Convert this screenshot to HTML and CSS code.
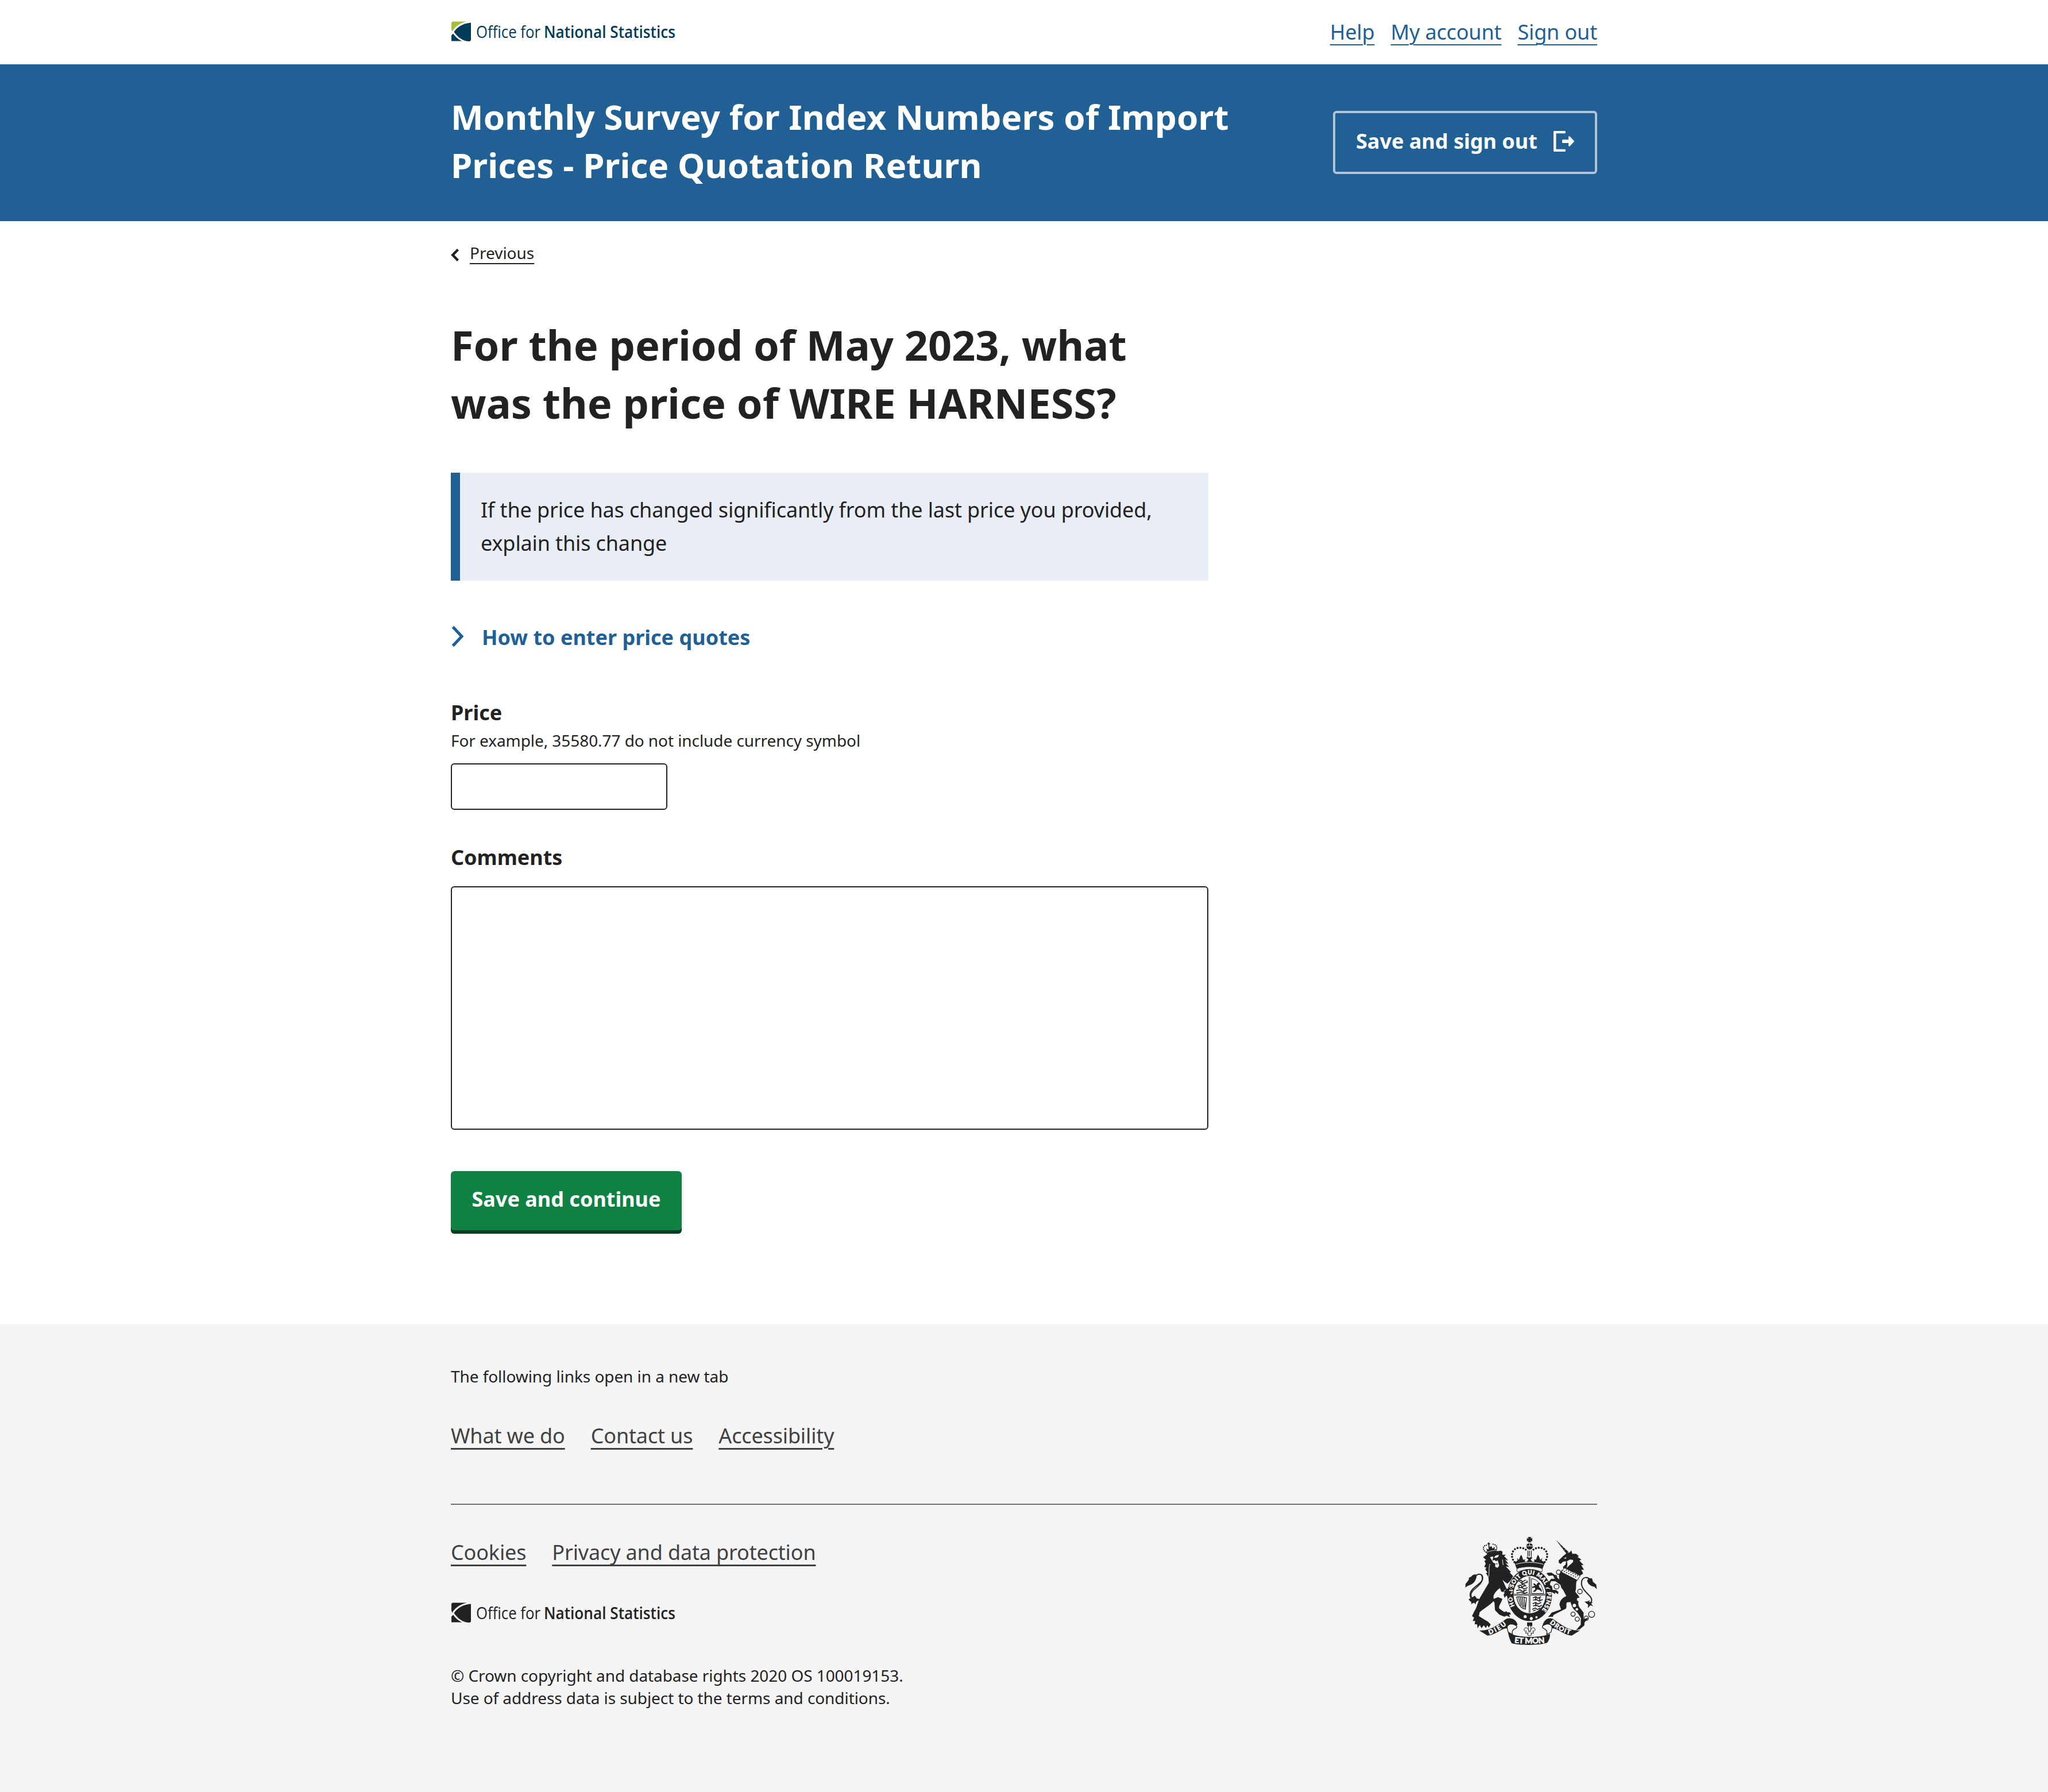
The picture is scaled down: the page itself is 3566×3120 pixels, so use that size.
FILE: index.html
```html
<!DOCTYPE html>
<html lang="en">
<head>
<meta charset="utf-8">
<title>Monthly Survey for Index Numbers of Import Prices - Price Quotation Return</title>
<link rel="stylesheet" href="styles.css">
</head>
<body>
<svg class="defs" width="0" height="0" aria-hidden="true">
  <symbol id="ons-mark" viewBox="0 0 34 35">
    <path class="mark-accent" d="M3 0.500H27C16 3 6 9 1.500 18L0 14V3.500A3 3 0 0 1 3 0.500Z"/>
    <path d="M34 2.500V32A3 3 0 0 1 31 35C20 35 11 28 4.500 18.500C10 10 20 3.500 34 2.500Z"/>
    <path d="M3 21.500C7 27 12 32 19 34.500H0V24.500Z"/>
  </symbol>
</svg>

<header>
  <div class="topbar">
    <div class="container topbar-inner">
      <svg class="logo" width="400" height="44" viewBox="0 0 400 44" role="img" aria-label="Office for National Statistics">
        <use href="#ons-mark" x="1" y="4" width="34" height="35"/>
        <text class="logo-light" x="44" y="32.500" textLength="112" lengthAdjust="spacingAndGlyphs">Office for</text>
        <text class="logo-bold" x="162" y="32.500" textLength="229" lengthAdjust="spacingAndGlyphs">National Statistics</text>
      </svg>
      <nav class="top-links"><a href="#">Help</a><a href="#">My account</a><a href="#">Sign out</a></nav>
    </div>
  </div>
  <div class="banner">
    <div class="container banner-inner">
      <div class="survey-title">Monthly Survey for Index Numbers of Import Prices - Price Quotation Return</div>
      <button class="btn-ghost" type="button">Save and sign out
        <svg width="36" height="36" viewBox="0 0 36 36" aria-hidden="true">
          <path d="M1.500 0H19.500A1.500 1.500 0 0 1 21 1.500V2.800A1.500 1.500 0 0 1 19.500 4.300H4.500V31.700H19.500A1.500 1.500 0 0 1 21 33.200V34.500A1.500 1.500 0 0 1 19.500 36H1.500A1.500 1.500 0 0 1 0 34.500V1.500A1.500 1.500 0 0 1 1.500 0Z"/>
          <path d="M16.500 15H26V10.500Q26.500 8.500 28.500 9.500L35.500 17Q36.300 18 35.500 19L28.500 26.500Q26.500 27.500 26 25.500V21H16.500Q15 21 15 19.500V16.500Q15 15 16.500 15Z"/>
        </svg>
      </button>
    </div>
  </div>
</header>

<main class="container">
  <a class="previous" href="#">
    <svg width="14" height="24" viewBox="0 0 14 24" aria-hidden="true"><path d="M12.500 2.500L3.200 12L12.500 21.500"/></svg>
    <span>Previous</span>
  </a>
  <form class="question">
    <h1>For the period of May 2023, what was the price of WIRE HARNESS?</h1>
    <div class="panel">If the price has changed significantly from the last price you provided, explain this change</div>
    <div class="details">
      <svg width="22" height="38" viewBox="0 0 22 38" aria-hidden="true"><path d="M3.500 2.500L19 19L3.500 35.500"/></svg>
      <span>How to enter price quotes</span>
    </div>
    <label class="label" for="price">Price</label>
    <div class="hint">For example, 35580.77 do not include currency symbol</div>
    <input class="field price" id="price" type="text">
    <label class="label comments-label" for="comments">Comments</label>
    <textarea class="field comments" id="comments"></textarea>
    <button class="btn-save" type="button">Save and continue</button>
  </form>
</main>

<footer>
  <div class="container">
    <p class="small new-tab">The following links open in a new tab</p>
    <nav class="foot-links"><a href="#">What we do</a><a href="#">Contact us</a><a href="#">Accessibility</a></nav>
    <hr>
    <div class="foot-bottom">
      <div>
        <nav class="foot-links legal"><a href="#">Cookies</a><a href="#">Privacy and data protection</a></nav>
        <svg class="logo logo-mono" width="400" height="44" viewBox="0 0 400 44" role="img" aria-label="Office for National Statistics">
          <use href="#ons-mark" x="1" y="4" width="34" height="35"/>
          <text class="logo-light" x="44" y="32.500" textLength="112" lengthAdjust="spacingAndGlyphs">Office for</text>
          <text class="logo-bold" x="162" y="32.500" textLength="229" lengthAdjust="spacingAndGlyphs">National Statistics</text>
        </svg>
        <p class="small copyright">© Crown copyright and database rights 2020 OS 100019153.<br>Use of address data is subject to the terms and conditions.</p>
      </div>
      <svg class="crest" width="230" height="190" viewBox="33 30 690 570" role="img" aria-label="Royal coat of arms">
        <!-- crown -->
        <path d="M361 33H379L375 42L384 38V57L375 52L379 61H361L365 52L356 57V38L365 42Z"/>
        <circle cx="370" cy="82" r="17"/>
        <path class="cut" d="M353 80H387M370 66V80" stroke-width="3"/>
        <path class="dots" d="M350 99C335 86 300 84 286 104C270 126 280 150 292 166M390 99C405 86 440 84 454 104C470 126 460 150 448 166"/>
        <path class="line" d="M361 104V134M369 104V134M379 104V134" stroke-width="4"/>
        <path d="M287 156C300 166 302 160 308 152C300 148 305 140 312 152C318 150 316 140 326 126C336 140 332 152 340 152C344 148 350 150 344 160C352 166 358 162 364 150L355 144L356 136L369 141L382 136L383 144L376 150C382 162 388 166 396 160C390 150 396 148 400 152C408 152 404 140 414 126C424 140 422 150 428 152C435 140 440 148 432 152C438 160 442 166 454 156L437 200C400 186 340 186 303 200Z"/>
        <path class="cut" d="M298 176C340 162 400 162 442 176" stroke-width="3"/>
        <path class="line fill-bg" d="M306 197C340 185 400 185 434 197Q440 206 433 216C400 200 340 200 307 216Q300 206 306 197Z" stroke-width="3"/>
        <!-- garter -->
        <ellipse cx="370" cy="336" rx="117" ry="136"/>
        <ellipse class="bg" cx="370" cy="334" rx="84" ry="98"/>
        <path id="garter-path" class="none" d="M309 418A91 109 0 1 1 431 418"/>
        <text class="motto garter"><textPath href="#garter-path" startOffset="30" textLength="456" lengthAdjust="spacing">HONI SOIT QUI MAL Y PENSE</textPath></text>
        <path class="line" d="M370 240V430M286 335H454" stroke-width="8"/>
        <path class="cut" d="M370 240V430M286 335H454" stroke-width="2.500"/>
        <!-- quarterings -->
        <g class="line" stroke-width="5">
          <path d="M313 266L325 259L334 267L350 257M320 268L333 277L355 270M330 267V282L343 282L352 291M307 290L322 284L332 294L349 285M310 300L328 296L343 305L359 297M315 284V303M300 313L320 309L334 318L355 309M302 326L323 321L343 328L360 322M340 309V327M357 260V274"/>
          <path d="M388 352L402 345L413 353L430 344M388 363L405 359L420 368L438 359M402 345V365M423 350V370M386 382L402 375L413 383L431 374M388 393L405 389L420 397L434 389M402 375V395M384 411L400 404L411 412L426 404M388 419L403 414"/>
        </g>
        <path class="line" d="M380 250V328H444C438 286 415 256 380 250Z" stroke-width="3"/>
        <path d="M388 278C398 270 398 282 407 284C410 268 424 268 426 282L418 283L421 296C430 300 434 310 435 320L422 310L411 307L397 320L387 318L400 306L397 296L384 301L385 292L398 288Z"/>
        <path class="line" d="M303 346C320 346 332 343 354 351L348 410C328 407 310 388 303 346ZM313 349L325 392M322 348L334 400M331 348L341 403M341 349L347 400" stroke-width="4"/>
        <path class="line" d="M319 419C305 420 301 429 307 437" stroke-width="5"/>
        <circle class="bg" cx="347" cy="449" r="8"/><circle class="bg" cx="379" cy="459" r="8"/><circle class="bg" cx="406" cy="452" r="6"/>
        <!-- lion -->
        <path class="dots lion-crown" d="M142 112C121 99 126 74 148 76M196 100C206 81 187 66 170 72"/>
        <path d="M150 66H154V61H159V66H164V71H159L161 86L171 80L176 94L188 84L187 98L200 96L197 110C179 109 164 114 149 124L140 110L149 109L144 94L156 99L154 71H150Z"/>
        <path class="cut" d="M146 114C162 106 180 102 198 103" stroke-width="2.500"/>
        <path d="M127 139L150 122C172 108 201 107 221 105L229 110L227 125L247 126L237 133L259 157L242 150L260 174L244 169L264 190L246 187L273 216L266 218L284 238C278 251 269 265 254 277L230 260L250 304L267 301L263 315L277 321L268 329L283 337L278 349L267 340L262 354L248 339L240 351L234 335L240 323L222 318L215 300L204 308C190 321 176 341 183 356L205 347L228 356C222 379 206 392 212 407L238 425L249 421L254 427L268 427L272 438L263 438L268 452L250 444L238 449L212 439L190 416C185 390 191 374 181 368C154 397 126 410 109 426L105 446L136 466L151 474L167 490L157 506L149 494L142 509L131 494L119 509L110 493L98 510L96 490L83 488L86 472L73 472L80 454L69 446L83 418C98 395 101 362 118 338L157 272L155 242L142 222L150 219L138 201L145 194L133 188L141 173L134 158L143 152Z"/>
        <path class="bg" d="M163 139L177 134L182 142L194 130L210 126L205 138L190 144L203 153L208 170L211 183L202 194L190 188L191 172L180 167L172 153Z"/>
        <path d="M180 140L193 142L205 154L195 160L187 153L176 156ZM193 170L205 173L198 177Z"/>
        <path class="cut" d="M230 259L283 312M156 240C161 210 155 195 163 174M228 151L232 180M244 308L231 324" stroke-width="3"/>
        <path class="line tail" d="M77 373C58 353 53 329 70 309C94 282 128 270 125 244C123 226 103 222 91 234"/>
        <path class="line thin-tail" d="M89 371C59 350 58 329 77 311C104 286 135 267 119 233"/>
        <path d="M93 230C80 226 72 231 65 240L52 247C56 254 49 262 43 269L35 278V300C40 285 69 286 82 267C91 254 94 241 93 230ZM51 359L66 374L64 384L80 376L88 385L91 372L114 358L94 354L84 340Z"/>
        <!-- unicorn -->
        <path d="M507 48L574 112L562 120Z"/>
        <path class="cut" d="M536 72L530 77M548 84L541 90M559 97L551 103" stroke-width="1.800"/>
        <path d="M522 155L545 133L563 118L580 113L588 103L593 121L613 121L627 133L621 138L641 151L630 156L652 179L640 180L654 204L640 204L650 224L634 235L622 229L602 217L579 214L548 200L544 190L558 176L561 160L545 162L532 174L523 168Z"/>
        <path class="bg" d="M548 145L560 139L562 146ZM565 160L581 151L597 153L598 163C588 174 577 180 564 196L568 177Z"/>
        <path d="M538 205L626 247L616 263C610 278 616 298 609 319C617 334 635 342 629 359C623 374 621 391 635 406L652 428L652 463L678 454L657 479L656 495L632 515L612 520L637 492L638 456L618 426C595 409 589 393 584 373L566 374C558 381 566 395 560 407L524 425L495 440L492 449L466 451L478 438L485 428L534 411L526 387C527 370 538 350 562 342L546 311L535 297L531 283L504 264L482 264L475 283L487 290L490 309L508 310L521 320L518 332L505 322L502 331L491 323L475 318L479 304L460 292L468 269L483 251L496 252L505 248L491 234L470 236L458 223L468 220L484 219L502 231L514 245L525 254L523 235Z"/>
        <path class="line fill-bg" d="M552 194L634 236L619 259L536 216Z" stroke-width="3"/>
        <path class="dots collar" d="M552 213L615 244M562 206L622 236"/>
        <path class="line tail" d="M680 383C700 374 698 353 681 338C656 313 634 291 643 261C651 239 674 242 686 255"/>
        <path d="M678 249L696 249L701 267L718 281L721 306L709 293L692 289L677 277L670 262ZM657 371L676 387L674 404L688 389L702 395L691 380L701 375L681 372L684 363L673 369Z"/>
        <circle class="bg" cx="626" cy="359" r="9"/><circle class="bg" cx="604" cy="391" r="9"/><circle class="bg" cx="617" cy="411" r="7"/>
        <g class="line" stroke-width="4">
          <circle cx="521" cy="217" r="11"/><circle cx="505" cy="240" r="7"/><circle cx="511" cy="292" r="13"/><circle cx="633" cy="318" r="12"/><circle cx="597" cy="436" r="11"/><circle cx="619" cy="462" r="11"/><circle cx="666" cy="457" r="11"/><circle cx="694" cy="437" r="16"/>
        </g>
        <!-- ribbon -->
        <path d="M107 521C164 526 207 490 250 460C280 451 302 469 307 491L298 498C274 486 254 492 253 510C223 508 190 547 150 548Z"/>
        <path d="M633 521C576 526 533 490 490 460C460 451 445 471 438 494L444 500C466 486 486 492 487 510C517 508 550 547 590 548Z"/>
        <path class="line fill-bg" d="M253 510C251 493 266 482 293 492C311 499 302 509 294 512C278 519 276 534 282 543L258 530Z" stroke-width="4"/>
        <path class="line fill-bg" d="M487 510C489 493 474 482 447 492C429 499 438 509 446 512C462 519 464 534 458 543L482 530Z" stroke-width="4"/>
        <path d="M257 529C286 560 431 564 476 538C479 560 469 576 461 586C424 600 316 600 277 588C269 576 260 550 257 529Z"/>
        <path id="dieu-path" class="none" d="M160 543Q216 524 256 485"/>
        <path id="droit-path" class="none" d="M474 483Q524 527 586 544"/>
        <path id="mon-path" class="none" d="M290 586Q370 595 452 586"/>
        <text class="motto"><textPath href="#dieu-path" textLength="104">DIEU</textPath></text>
        <text class="motto"><textPath href="#droit-path" textLength="122">DROIT</textPath></text>
        <text class="motto large"><textPath href="#mon-path" textLength="160">ET MON</textPath></text>
        <path d="M357 479H384V499H376V508H364V499H357Z"/>
        <path class="line fill-bg" d="M370 492C354 514 370 523 367 530C365 512 354 501 344 510C337 519 344 527 353 524L349 535H363L359 544L370 550L381 544L377 535H391L387 524C397 527 403 519 396 510C386 501 376 512 373 530C370 523 386 514 370 492Z" stroke-width="3"/>
      </svg>
    </div>
  </div>
</footer>
</body>
</html>
```
FILE: styles.css
```css
* { box-sizing: border-box; }
body {
  margin: 0;
  background: #fff;
  color: #222;
  font: 36px/1.6 "Noto Sans", sans-serif;
}
h1, p { margin: 0; }
button, input, textarea { font: inherit; margin: 0; }
.container { width: 1996px; margin: 0 auto; }
.defs { display: block; height: 0; }

.topbar { height: 112px; --accent: #a8bd3a; }
.topbar-inner { display: flex; justify-content: space-between; align-items: flex-start; }
.logo { display: block; overflow: visible; fill: #003c57; }
.topbar .logo { margin-top: 33px; }
.mark-accent { fill: var(--accent, #222); }
.logo text { font-family: "Open Sans", "Noto Sans", sans-serif; font-size: 29.5px; }
.logo-light { font-weight: 400; }
.logo-bold { font-weight: 600; }
.top-links { display: flex; gap: 28px; padding-top: 27px; }
a {
  color: #206095;
  letter-spacing: -0.15px;
  text-decoration: underline;
  text-decoration-thickness: 2px;
  text-underline-offset: 8px;
}

.banner { height: 273px; background: #206095; color: #fff; }
.banner-inner { display: flex; justify-content: space-between; align-items: flex-start; }
.survey-title {
  width: 1400px;
  padding-top: 49px;
  font-size: 60px;
  font-weight: 700;
  line-height: 84px;
  letter-spacing: 0.09px;
}
.btn-ghost {
  display: flex;
  justify-content: space-between;
  width: 460px;
  height: 110px;
  margin-top: 81px;
  padding: 24px 36px 22px;
  border: 4px solid #b0c3d9;
  border-radius: 6px;
  background: none;
  color: #fff;
  font-weight: 700;
  line-height: 50.4px;
}
.btn-ghost svg { margin-top: 7px; fill: #fff; }

.previous {
  display: flex;
  gap: 19px;
  padding-top: 36px;
  color: #222;
  font-size: 28px;
  line-height: 39.2px;
  letter-spacing: 0;
  text-decoration: none;
}
.previous svg { margin-top: 11px; fill: none; stroke: #222; stroke-width: 4.4; }
.previous span { text-decoration: underline; text-decoration-thickness: 2px; text-underline-offset: 7px; }

.question { display: flex; flex-direction: column; align-items: flex-start; width: 1319px; }
h1 { margin-top: 90px; font-size: 72px; font-weight: 700; line-height: 100.8px; letter-spacing: 0.03px; }
.panel {
  width: 100%;
  height: 188px;
  margin-top: 71px;
  padding: 36.4px 36px 0;
  border-left: 16px solid #206095;
  background: #e9eef6;
  letter-spacing: -0.13px;
}
.details {
  display: flex;
  gap: 32px;
  margin-top: 74.4px;
  color: #206095;
  font-weight: 700;
  line-height: 50.4px;
}
.details svg { margin-top: 3.6px; fill: none; stroke: #206095; stroke-width: 5.2; }
.label { display: block; margin-top: 80.2px; font-weight: 700; line-height: 50.4px; }
.hint { margin-top: 3.4px; font-size: 28px; line-height: 39.2px; letter-spacing: -0.07px; }
.field { display: block; border: 2px solid #222; border-radius: 6px; background: #fff; resize: none; }
.price { width: 377px; height: 81px; margin-top: 19.8px; }
.comments-label { margin-top: 58.4px; }
.comments { width: 100%; height: 424px; margin-top: 24.2px; }
.btn-save {
  width: 402px;
  height: 103px;
  margin-top: 72px;
  padding: 0 0 4px;
  border: 0;
  border-radius: 6px;
  background: #0f8243;
  box-shadow: 0 6px 0 #073d20;
  color: #fff;
  font-weight: 700;
}

footer { height: 814px; margin-top: 164px; background: #f5f5f6; }
.small { font-size: 28px; line-height: 39.2px; letter-spacing: -0.07px; }
.new-tab { padding-top: 71.2px; }
.foot-links { display: flex; gap: 45px; margin-top: 55px; }
.foot-links a { color: #414042; text-decoration-thickness: 3px; }
hr { height: 2px; margin: 89px 0 0; border: 0; background: #707071; }
.foot-bottom { display: flex; justify-content: space-between; align-items: flex-start; }
.legal a { text-decoration-skip-ink: none; }
.legal { margin-top: 54px; }
.logo-mono { margin-top: 55px; fill: #222; }
.copyright { margin-top: 67.4px; }

.crest { margin-top: 55px; fill: #222; }
.crest .bg { fill: #f5f5f6; }
.crest .none { fill: none; }
.crest .line { fill: none; stroke: #222; }
.crest .fill-bg { fill: #f5f5f6; }
.crest .cut { fill: none; stroke: #f5f5f6; }
.crest .dots { fill: none; stroke: #222; stroke-width: 11; stroke-linecap: round; stroke-dasharray: 0 15; }
.crest .lion-crown { stroke-width: 7; stroke-dasharray: 0 10; }
.crest .collar { stroke-width: 6; stroke-dasharray: 0 13; }
.crest .tail { stroke-width: 6; }
.crest .thin-tail { stroke-width: 5; }
.crest .motto { fill: #f5f5f6; stroke: #f5f5f6; stroke-width: 1.5; font: 900 34px/1 "Lato", "Noto Sans", sans-serif; }
.crest .garter { font-size: 30px; }
.crest .large { font-size: 42px; }
```
